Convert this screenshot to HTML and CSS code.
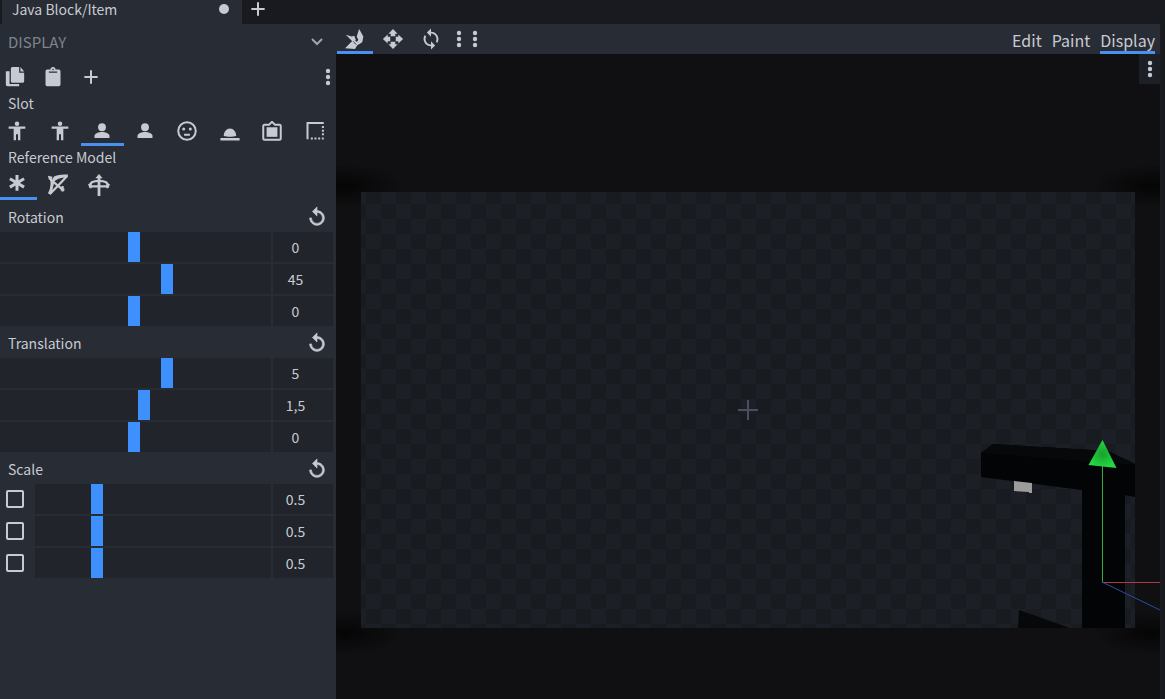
FILE: index.html
```html
<!DOCTYPE html>
<html lang="en">
<head>
<meta charset="utf-8">
<title>Java Block/Item</title>
<link rel="stylesheet" href="styles.css">
</head>
<body>
<svg class="defs" aria-hidden="true">
  <symbol id="dots" viewBox="0 0 8 18"><circle cx="4" cy="3" r="2.2"/><circle cx="4" cy="9" r="2.2"/><circle cx="4" cy="15" r="2.2"/></symbol>
  <symbol id="plus" viewBox="0 0 24 24"><path d="M10.800 4h2.400v6.800H20v2.400h-6.800V20h-2.400v-6.800H4v-2.400h6.800z"/></symbol>
  <symbol id="body" viewBox="0 0 24 24"><circle cx="12" cy="3.200" r="2.700"/><path d="M2 6.500h20v2.700h-6V23h-2.800v-7h-2.400v7H8V9.200H2z"/></symbol>
  <symbol id="person" viewBox="0 0 24 24"><circle cx="12" cy="7.500" r="4.700"/><path d="M3 20.500v-2.500c0-3.500 5.500-4.800 9-4.800s9 1.300 9 4.800v2.500z"/></symbol>
  <symbol id="reset" viewBox="0 0 24 24"><path stroke="currentColor" stroke-width=".7" d="M12 5V1L7 6l5 5V7c3.300 0 6 2.700 6 6s-2.700 6-6 6-6-2.700-6-6H4c0 4.400 3.600 8 8 8s8-3.600 8-8-3.600-8-8-8z"/></symbol>
</svg>
<div class="app">
  <header class="tabs">
    <div class="tab"><span>Java Block/Item</span><span class="unsaved"></span></div>
    <button class="new-tab" aria-label="New tab"><svg class="icon" aria-hidden="true"><use href="#plus"/></svg></button>
  </header>
  <div class="work">
    <aside class="sidebar">
      <div class="panel-head"><h2>DISPLAY</h2>
        <button aria-label="Collapse panel"><svg class="chevron" viewBox="0 0 14 10" aria-hidden="true"><path d="M2 2l5 5 5-5"/></svg></button>
      </div>
      <div class="actions">
        <button aria-label="Copy"><svg class="icon" viewBox="0 0 24 24" aria-hidden="true"><path d="M9 0h8v7h6v10a2 2 0 0 1-2 2H9a2 2 0 0 1-2-2V2a2 2 0 0 1 2-2zM18.500 0L23 5.500h-4.500zM1 5h4.500v15.500H17V23H3a2 2 0 0 1-2-2z"/></svg></button>
        <button aria-label="Paste"><svg class="icon" viewBox="0 0 24 24" aria-hidden="true"><path fill-rule="evenodd" d="M9 3a3 3 0 0 1 6 0h4a2 2 0 0 1 2 2v16a2 2 0 0 1-2 2H5a2 2 0 0 1-2-2V5a2 2 0 0 1 2-2zM12 2a1 1 0 1 0 0 2 1 1 0 0 0 0-2zM7 5.500V7h10V5.500z"/></svg></button>
        <button aria-label="Add"><svg class="icon" aria-hidden="true"><use href="#plus"/></svg></button>
        <button class="more" aria-label="More"><svg class="dots" aria-hidden="true"><use href="#dots"/></svg></button>
      </div>
      <h3>Slot</h3>
      <div class="slots">
        <button aria-label="Third person right"><svg class="icon" aria-hidden="true"><use href="#body"/></svg></button>
        <button aria-label="Third person left"><svg class="icon" aria-hidden="true"><use href="#body"/></svg></button>
        <button class="on" aria-label="First person right"><svg class="icon" aria-hidden="true"><use href="#person"/></svg></button>
        <button aria-label="First person left"><svg class="icon" aria-hidden="true"><use href="#person"/></svg></button>
        <button aria-label="Head"><svg class="icon" viewBox="0 0 24 24" aria-hidden="true"><circle class="line" cx="12" cy="12" r="10.500"/><circle cx="8" cy="9.500" r="1.800"/><circle cx="16" cy="9.500" r="1.800"/><path class="line" d="M8.500 16.500h7"/></svg></button>
        <button aria-label="Ground"><svg class="icon" viewBox="0 0 24 24" aria-hidden="true"><path d="M.5 20.500h23v3H.5zM4.500 18c0-5 3.500-9 7.500-9s7.500 4 7.500 9c-4 1.200-11 1.200-15 0z"/></svg></button>
        <button aria-label="Frame"><svg class="icon" viewBox="0 0 24 24" aria-hidden="true"><path class="line" d="M3 4.500h5.500L12 1l3.500 3.500H21a1.500 1.500 0 0 1 1.500 1.500V21a1.500 1.500 0 0 1-1.500 1.500H3A1.500 1.500 0 0 1 1.500 21V6A1.500 1.500 0 0 1 3 4.500z"/><path d="M5.500 7.500h13V19h-13z"/></svg></button>
        <button aria-label="Shelf"><svg class="icon" viewBox="0 0 24 24" aria-hidden="true"><path class="line" d="M22.500 2.500H3V22"/><path class="line dash" d="M7 21h15.500"/><path class="line dash" d="M21.500 6v13"/></svg></button>
      </div>
      <h3>Reference Model</h3>
      <div class="refs">
        <button class="on" aria-label="Standard"><svg class="icon" viewBox="0 0 24 24" aria-hidden="true"><path class="heavy" d="M12 0v19M3.500 4.500l17 10M20.500 4.500l-17 10"/></svg></button>
        <button aria-label="Bow"><svg class="icon big" viewBox="0 0 24 24" aria-hidden="true"><path class="line" d="M4 5c2 5 1 12-1 17M3 22C9 16 16 9 22 2M5 7l12 10M15 17h4M17 19v-6"/><path d="M1 2l5 1-1 4-3-1zM8 2.500c5-2 10-2 15-2l-1 3.500c-7-1-11 2-14 4-1 6-2 10-5 14l-2-1C5 15 3 8 8 2.500z"/></svg></button>
        <button aria-label="Crossbow"><svg class="icon big" viewBox="0 0 24 24" aria-hidden="true"><path d="M12 0l4 4.500h-2.500V24h-3V4.500H8z"/><path class="line" d="M2 13c0-4 5-5.500 10-5.500S22 9 22 13M1 13.500h22"/><path d="M0 11h4v4.500H2zM24 11h-4v4.500h2z"/></svg></button>
      </div>

      <div class="groups">
      <section>
        <div class="group-head"><h3>Rotation</h3><button aria-label="Reset rotation"><svg class="icon big" aria-hidden="true"><use href="#reset"/></svg></button></div>
        <div class="row"><div class="track"><input class="wide" type="range" min="-180" max="180" value="0" aria-label="Rotation X"></div><input class="num" type="text" value="0" aria-label="Rotation X value"></div>
        <div class="row"><div class="track"><input class="wide" type="range" min="-180" max="180" value="45" aria-label="Rotation Y"></div><input class="num" type="text" value="45" aria-label="Rotation Y value"></div>
        <div class="row"><div class="track"><input class="wide" type="range" min="-180" max="180" value="0" aria-label="Rotation Z"></div><input class="num" type="text" value="0" aria-label="Rotation Z value"></div>
      </section>
      <section>
        <div class="group-head"><h3>Translation</h3><button aria-label="Reset translation"><svg class="icon big" aria-hidden="true"><use href="#reset"/></svg></button></div>
        <div class="row"><div class="track"><input class="wide" type="range" min="-20" max="20" step="0.5" value="5" aria-label="Translation X"></div><input class="num" type="text" value="5" aria-label="Translation X value"></div>
        <div class="row"><div class="track"><input class="wide" type="range" min="-20" max="20" step="0.5" value="1.5" aria-label="Translation Y"></div><input class="num" type="text" value="1,5" aria-label="Translation Y value"></div>
        <div class="row"><div class="track"><input class="wide" type="range" min="-20" max="20" step="0.5" value="0" aria-label="Translation Z"></div><input class="num" type="text" value="0" aria-label="Translation Z value"></div>
      </section>
      <section>
        <div class="group-head"><h3>Scale</h3><button aria-label="Reset scale"><svg class="icon big" aria-hidden="true"><use href="#reset"/></svg></button></div>
        <div class="row"><label class="mirror"><input type="checkbox" aria-label="Mirror X"></label><div class="track"><input type="range" min="0" max="2" step="0.1" value="0.5" aria-label="Scale X"></div><input class="num" type="text" value="0.5" aria-label="Scale X value"></div>
        <div class="row"><label class="mirror"><input type="checkbox" aria-label="Mirror Y"></label><div class="track"><input type="range" min="0" max="2" step="0.1" value="0.5" aria-label="Scale Y"></div><input class="num" type="text" value="0.5" aria-label="Scale Y value"></div>
        <div class="row"><label class="mirror"><input type="checkbox" aria-label="Mirror Z"></label><div class="track"><input type="range" min="0" max="2" step="0.1" value="0.5" aria-label="Scale Z"></div><input class="num" type="text" value="0.5" aria-label="Scale Z value"></div>
      </section>
      </div>
    </aside>

    <main class="main">
      <nav class="toolbar">
        <button class="tool on" aria-label="Vertex snap"><svg class="icon" viewBox="0 0 24 24" aria-hidden="true"><path d="M1 7l7 2 3-1 2 5-4 2zM17 0l5 9-1 6-4 3-3-2 2-3-2-4zM0 23l9-9 3 4 3 1-3 5z"/><path class="line" d="M10 13l5 5 5-3"/></svg></button>
        <button class="tool" aria-label="Move"><svg class="icon big" viewBox="0 0 24 24" aria-hidden="true"><path d="M12 1l5 5.200h-2.500V9h-5V6.200H7zM12 23l5-5.200h-2.500V15h-5v2.800H7zM1 12l5.200-5v2.500H9v5H6.200V17zM23 12l-5.200-5v2.500H15v5h2.800V17z"/></svg></button>
        <button class="tool" aria-label="Rotate"><svg class="icon big" viewBox="0 0 24 24" aria-hidden="true"><path d="M12 4V0.500L7.500 5 12 9.500V6c3.300 0 6 2.700 6 6 0 1-.3 2-.7 2.800l1.500 1.500A8 8 0 0 0 12 4zM12 18c-3.300 0-6-2.700-6-6 0-1 .3-2 .7-2.800L5.200 7.700A8 8 0 0 0 12 20v3.500l4.500-4.500L12 14.500z"/></svg></button>
        <button class="slim" aria-label="Options"><svg class="dots" aria-hidden="true"><use href="#dots"/></svg></button>
        <button class="slim" aria-label="More options"><svg class="dots" aria-hidden="true"><use href="#dots"/></svg></button>
        <div class="modes"><a href="#edit">Edit</a><a href="#paint">Paint</a><a class="on" href="#display">Display</a></div>
      </nav>
      <div class="viewport">
        <button class="view-menu" aria-label="Viewport menu"><svg class="dots" aria-hidden="true"><use href="#dots"/></svg></button>
        <div class="canvas"><svg class="cross" viewBox="0 0 20 20" aria-hidden="true"><path d="M9 0h2v9h9v2h-9v9H9v-9H0V9h9z"/></svg></div>
        <svg class="scene" viewBox="960 420 200 210" aria-hidden="true">
          <defs><radialGradient id="cone"><stop offset="0" stop-color="#18a02c"/><stop offset="1" stop-color="#23d944"/></radialGradient></defs>
          <path fill="#030406" d="M981 453l12-9 115 7 27 13v33l-10-2v133h-43V490l-101-13z"/>
          <path fill="#06080a" d="M981 453l12-9 115 7 27 13v1z"/>
          <path fill="#06080a" d="M1019 610l51 18h-52z"/>
          <path fill="#9c9c9a" d="M1014 481l18 2v10l-3 0v-1l-15-1z"/>
          <path stroke="#2fae4a" d="M1102.500 465v117"/>
          <path stroke="#b03a48" d="M1102 582.500h58"/>
          <path stroke="#2a4fa8" fill="none" d="M1102 582l58 28"/>
          <path fill="url(#cone)" d="M1102.500 440l14 28-28-3z"/>
        </svg>
      </div>
    </main>
  </div>
</div>
</body>
</html>
```
FILE: styles.css
```css
* { box-sizing: border-box; }
body {
  margin: 0;
  background: #17191d;
  color: #c8cad2;
  font: 14px/20px "Noto Sans CJK JP", "Noto Sans", sans-serif;
}
button, input { font: inherit; color: inherit; margin: 0; }
button { padding: 0; border: 0; background: none; display: flex; align-items: center; justify-content: center; }
h2, h3 { margin: 0; font-size: 14px; font-weight: 400; line-height: 20px; }
svg { fill: currentColor; display: block; }
.defs { position: absolute; width: 0; height: 0; }
.icon { width: 20px; height: 20px; }
.icon.big { width: 22px; height: 22px; }
.dots { width: 8px; height: 18px; }
.line { fill: none; stroke: currentColor; stroke-width: 2.4; }
.dash { stroke-dasharray: 2.4 2; }
.heavy { fill: none; stroke: currentColor; stroke-width: 3.6; }

.app { min-height: 100vh; display: flex; flex-direction: column; }
.tabs { display: flex; height: 24px; padding-left: 2px; background: #191a1f; }
.tab { width: 240px; padding: 0 13px 6px 10px; display: flex; justify-content: space-between; align-items: center; background: #282c34; }
.unsaved { width: 10px; height: 10px; border-radius: 50%; background: #c8cad2; }
.new-tab { width: 32px; padding-bottom: 6px; }
.work { flex: 1; display: flex; }

.sidebar { width: 336px; flex: none; background: #282c34; }
.panel-head { display: flex; justify-content: space-between; align-items: center; height: 38px; padding: 0 12px 2px 8px; color: #7f848e; }
.panel-head h2 { font-size: 15px; }
.chevron { width: 14px; height: 10px; fill: none; stroke: #a0a4ad; stroke-width: 2; }
.actions { display: flex; align-items: center; gap: 18px; height: 30px; padding: 0 4px 0 5px; }
.more { margin-left: auto; }
.sidebar > h3 { padding: 0 8px; height: 24px; line-height: 22px; }
.slots, .refs { display: flex; height: 30px; margin-left: -4px; }
.slots button { flex: 1; }
.refs button { width: 41px; }
.on { box-shadow: inset 0 -3px #4a90f0; }

.groups { padding-top: 2px; }
.group-head { display: flex; justify-content: space-between; align-items: center; height: 30px; padding: 0 8px; }
.row { display: flex; gap: 2px; height: 30px; margin-bottom: 2px; padding-right: 3px; }
.track { flex: 1; min-width: 0; overflow: hidden; display: flex; background: #21252b; }
input[type="range"] { appearance: none; width: 100%; height: 30px; background: none; }
input.wide { flex: none; width: calc(100% + 5px); margin-left: -4px; }
input[type="range"]::-webkit-slider-thumb { appearance: none; width: 12px; height: 30px; border-radius: 0; background: #3e90ff; }
.num { width: 60px; padding: 0 15px 0 0; border: 0; text-align: center; background: #21252b; }
.mirror { width: 33px; padding-left: 6px; display: flex; align-items: center; }
.mirror input { appearance: none; width: 18px; height: 18px; border: 2px solid #c8cad2; border-radius: 2px; }

.main { flex: 1; min-width: 0; display: flex; flex-direction: column; margin-right: 3px; border-right: 2px solid #1b1c22; }
.toolbar { display: flex; height: 30px; padding: 0 5px 0 1px; background: #282c34; }
.tool { width: 36px; margin-right: 2px; }
.slim { width: 16px; }
.modes { margin-left: auto; display: flex; gap: 10px; font-size: 16px; line-height: 32px; }
.modes a { color: inherit; text-decoration: none; height: 30px; }

.viewport {
  position: relative;
  flex: 1;
  display: flex;
  padding: 138px 25px 71px;
  background:
    radial-gradient(ellipse 60px 22px at 8px 132px, #050506, transparent),
    radial-gradient(ellipse 60px 22px at calc(100% - 8px) 132px, #050506, transparent),
    radial-gradient(ellipse 60px 22px at 8px calc(100% - 66px), #050506, transparent),
    radial-gradient(ellipse 60px 22px at calc(100% - 8px) calc(100% - 66px), #050506, transparent),
    #101012;
}
.canvas {
  flex: 1;
  display: flex;
  align-items: center;
  justify-content: center;
  background: repeating-conic-gradient(#181b1f 0 25%, #1c1f26 0 50%) 5px 12px / 30px 30px;
}
.cross { width: 20px; height: 20px; fill: #4a4e5e; }
.view-menu { position: absolute; top: 0; right: 0; width: 21px; height: 30px; background: #1c1f26; }
.scene { position: absolute; right: 0; bottom: 69px; width: 200px; height: 210px; }
```
